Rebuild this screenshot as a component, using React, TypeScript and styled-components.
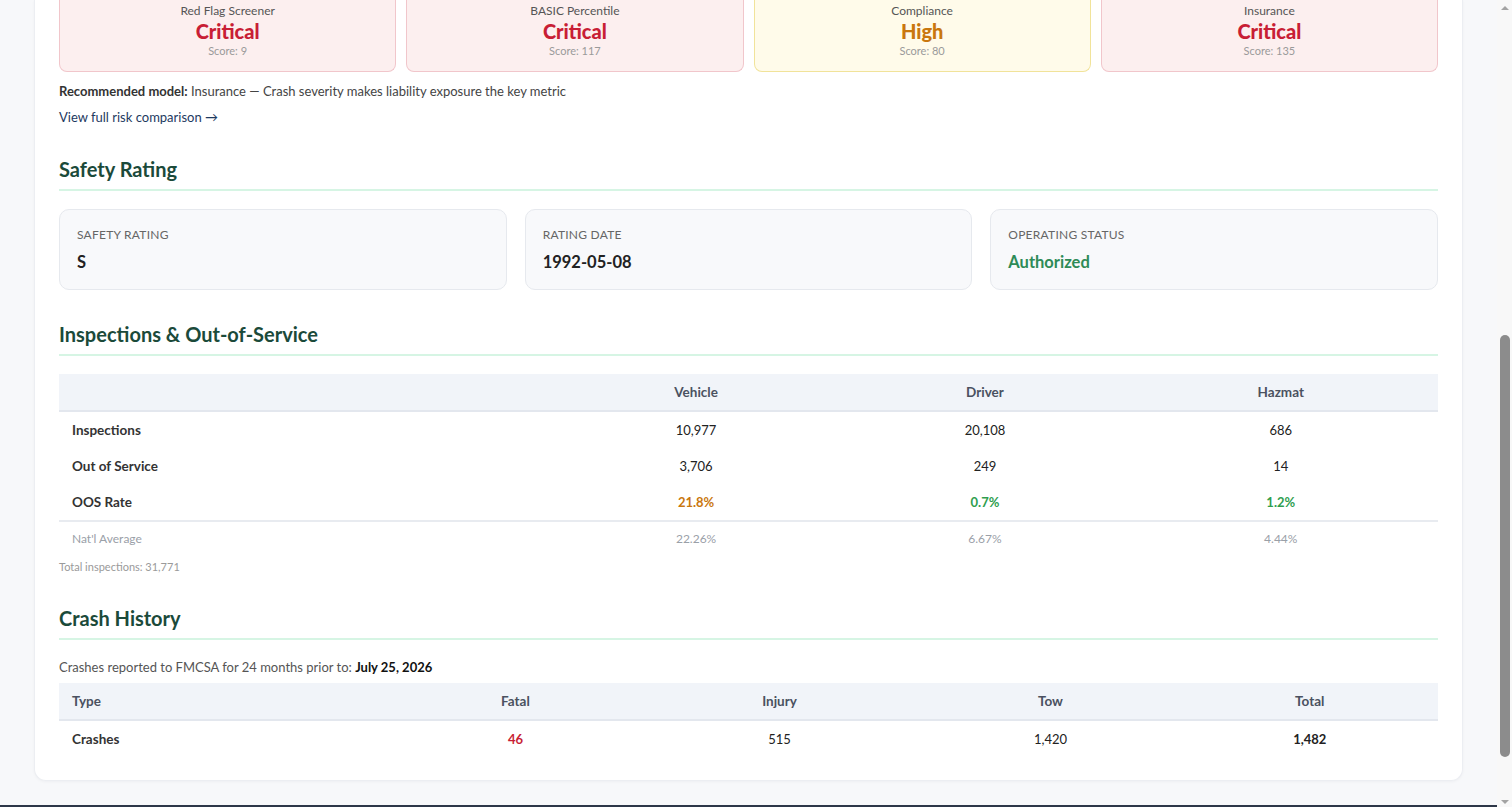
import React from 'react';
import styled, { createGlobalStyle } from 'styled-components';

const GlobalStyle = createGlobalStyle`
  html, body {
    margin: 0;
    padding: 0;
    overflow: hidden;
  }
  body {
    background: #f7f8fa;
    font-family: Lato, 'Noto Sans', sans-serif;
    color: #222;
  }
`;

const Shell = styled.div`
  display: grid;
  grid-template-columns: 1fr 15px;
  height: 100vh;
`;

const Viewport = styled.div`
  display: flex;
  flex-direction: column;
  min-width: 0;
`;

const Page = styled.main`
  padding: 0 34px 24px;
`;

const Card = styled.section`
  background: #fff;
  border: 1px solid #eceef2;
  border-top: none;
  border-radius: 0 0 12px 12px;
  box-shadow: 0 1px 3px rgba(20, 30, 50, 0.04);
  padding: 0 24px 23px;
`;

const SectionTitle = styled.h2`
  margin: 32px 0 18px;
  padding-bottom: 8px;
  border-bottom: 2px solid #d6f5e4;
  font-size: 20px;
  line-height: 24px;
  font-weight: 700;
  color: #1b4a3a;
`;

const RiskGrid = styled.div`
  display: grid;
  grid-template-columns: repeat(4, 1fr);
  gap: 10px;
`;

type RiskTone = 'red' | 'amber';

const RiskCard = styled.div<{ $tone: RiskTone }>`
  padding: 3px 12px 12px;
  text-align: center;
  border-radius: 0 0 8px 8px;
  border: 1px solid ${(p) => (p.$tone === 'red' ? '#f1c6cb' : '#f1e39a')};
  border-top: none;
  background: ${(p) => (p.$tone === 'red' ? '#fcefef' : '#fffbea')};
`;

const RiskLabel = styled.div`
  font-size: 12px;
  line-height: 16px;
  color: #555;
`;

const RiskLevel = styled.div<{ $tone: RiskTone }>`
  font-size: 20px;
  line-height: 24px;
  font-weight: 900;
  color: ${(p) => (p.$tone === 'red' ? '#c81e35' : '#c9770e')};
`;

const RiskScore = styled.div`
  font-size: 11px;
  line-height: 16px;
  color: #9a9a9a;
`;

const Note = styled.p`
  margin: 11px 0 0;
  font-size: 13px;
  line-height: 16px;
  color: #444;

  b {
    color: #333;
  }
`;

const TextLink = styled.a`
  display: block;
  margin-top: 10px;
  font-size: 13px;
  line-height: 16px;
  color: #1e3a5f;
  text-decoration: none;
`;

const StatGrid = styled.div`
  display: grid;
  grid-template-columns: repeat(3, 1fr);
  gap: 18px;
`;

const StatCard = styled.div`
  background: #f8f9fb;
  border: 1px solid #e6e9ee;
  border-radius: 10px;
  padding: 17px 17px 16px;
`;

const StatLabel = styled.div`
  font-size: 12px;
  line-height: 16px;
  text-transform: uppercase;
  letter-spacing: 0.02em;
  color: #666;
`;

const StatValue = styled.div<{ $good?: boolean }>`
  margin-top: 8px;
  font-size: 16.5px;
  line-height: 22px;
  font-weight: 700;
  color: ${(p) => (p.$good ? '#2e8b57' : '#222')};
`;

const Table = styled.table`
  width: 100%;
  border-collapse: collapse;
  table-layout: fixed;
  font-size: 13px;
`;

const Th = styled.th<{ $left?: boolean }>`
  height: 36px;
  padding: 0 13px;
  background: #f1f4f9;
  border-bottom: 2px solid #e3e7ee;
  font-size: 13.5px;
  font-weight: 700;
  color: #4a5160;
  text-align: ${(p) => (p.$left ? 'left' : 'center')};
`;

const Row = styled.tr<{ $divider?: boolean }>`
  border-bottom: ${(p) => (p.$divider ? '2px solid #e8ebf0' : 'none')};
`;

const RowLabel = styled.td<{ $muted?: boolean }>`
  height: ${(p) => (p.$muted ? '32px' : '36px')};
  padding: 0 13px;
  font-size: ${(p) => (p.$muted ? '12px' : '13.5px')};
  font-weight: ${(p) => (p.$muted ? 400 : 700)};
  color: ${(p) => (p.$muted ? '#9aa0a8' : '#333')};
`;

type Tone = 'plain' | 'warn' | 'good' | 'bad' | 'muted' | 'strong';

const toneColor: Record<Tone, string> = {
  plain: '#222',
  warn: '#c9770e',
  good: '#2f9e4f',
  bad: '#c81e35',
  muted: '#9aa0a8',
  strong: '#222',
};

const Cell = styled.td<{ $tone?: Tone }>`
  padding: 0 13px;
  text-align: center;
  font-size: ${(p) => (p.$tone === 'muted' ? '12px' : '13px')};
  font-weight: ${(p) => (p.$tone && ['warn', 'good', 'bad', 'strong'].includes(p.$tone) ? 700 : 400)};
  color: ${(p) => toneColor[p.$tone || 'plain']};
`;

const SmallNote = styled.div`
  margin-top: 6px;
  font-size: 11px;
  line-height: 14px;
  color: #9a9a9a;
`;

const CrashIntro = styled.p`
  margin: 0 0 7px;
  font-size: 13px;
  line-height: 18px;
  color: #555;

  b {
    color: #111;
  }
`;

const Footer = styled.footer`
  height: 4px;
  background: #2d3748;
`;

const ScrollRail = styled.aside`
  background: #f8f8f8;
  display: flex;
  flex-direction: column;
  align-items: center;
`;

const RailArrow = styled.div<{ $down?: boolean }>`
  height: 15px;
  display: flex;
  align-items: center;
  justify-content: center;

  &::before {
    content: '';
    border-left: 4px solid transparent;
    border-right: 4px solid transparent;
    ${(p) => (p.$down ? 'border-top: 4px solid #a3a3a3;' : 'border-bottom: 4px solid #a3a3a3;')}
  }
`;

const RailTrack = styled.div`
  flex: 1;
  display: flex;
  flex-direction: column;
  align-items: center;
`;

const RailThumb = styled.div`
  margin-top: 320px;
  width: 10px;
  height: 422px;
  border-radius: 5px;
  background: #8c8c8c;
`;

const risks: { label: string; level: string; score: number; tone: RiskTone }[] = [
  { label: 'Red Flag Screener', level: 'Critical', score: 9, tone: 'red' },
  { label: 'BASIC Percentile', level: 'Critical', score: 117, tone: 'red' },
  { label: 'Compliance', level: 'High', score: 80, tone: 'amber' },
  { label: 'Insurance', level: 'Critical', score: 135, tone: 'red' },
];

export default function App() {
  return (
    <>
      <GlobalStyle />
      <Shell>
        <Viewport>
          <Page>
            <Card>
              <RiskGrid>
                {risks.map((r) => (
                  <RiskCard key={r.label} $tone={r.tone}>
                    <RiskLabel>{r.label}</RiskLabel>
                    <RiskLevel $tone={r.tone}>{r.level}</RiskLevel>
                    <RiskScore>Score: {r.score}</RiskScore>
                  </RiskCard>
                ))}
              </RiskGrid>
              <Note>
                <b>Recommended model:</b> Insurance — Crash severity makes liability exposure the key metric
              </Note>
              <TextLink href="#">View full risk comparison →</TextLink>

              <SectionTitle>Safety Rating</SectionTitle>
              <StatGrid>
                <StatCard>
                  <StatLabel>Safety Rating</StatLabel>
                  <StatValue>S</StatValue>
                </StatCard>
                <StatCard>
                  <StatLabel>Rating Date</StatLabel>
                  <StatValue>1992-05-08</StatValue>
                </StatCard>
                <StatCard>
                  <StatLabel>Operating Status</StatLabel>
                  <StatValue $good>Authorized</StatValue>
                </StatCard>
              </StatGrid>

              <SectionTitle>Inspections &amp; Out-of-Service</SectionTitle>
              <Table>
                <colgroup>
                  <col style={{ width: '35.3%' }} />
                  <col style={{ width: '21.8%' }} />
                  <col style={{ width: '20.1%' }} />
                  <col style={{ width: '22.8%' }} />
                </colgroup>
                <thead>
                  <tr>
                    <Th $left />
                    <Th>Vehicle</Th>
                    <Th>Driver</Th>
                    <Th>Hazmat</Th>
                  </tr>
                </thead>
                <tbody>
                  <Row>
                    <RowLabel>Inspections</RowLabel>
                    <Cell>10,977</Cell>
                    <Cell>20,108</Cell>
                    <Cell>686</Cell>
                  </Row>
                  <Row>
                    <RowLabel>Out of Service</RowLabel>
                    <Cell>3,706</Cell>
                    <Cell>249</Cell>
                    <Cell>14</Cell>
                  </Row>
                  <Row $divider>
                    <RowLabel>OOS Rate</RowLabel>
                    <Cell $tone="warn">21.8%</Cell>
                    <Cell $tone="good">0.7%</Cell>
                    <Cell $tone="good">1.2%</Cell>
                  </Row>
                  <Row>
                    <RowLabel $muted>Nat'l Average</RowLabel>
                    <Cell $tone="muted">22.26%</Cell>
                    <Cell $tone="muted">6.67%</Cell>
                    <Cell $tone="muted">4.44%</Cell>
                  </Row>
                </tbody>
              </Table>
              <SmallNote>Total inspections: 31,771</SmallNote>

              <SectionTitle>Crash History</SectionTitle>
              <CrashIntro>
                Crashes reported to FMCSA for 24 months prior to: <b>July 25, 2026</b>
              </CrashIntro>
              <Table>
                <colgroup>
                  <col style={{ width: '24.1%' }} />
                  <col style={{ width: '18%' }} />
                  <col style={{ width: '20.3%' }} />
                  <col style={{ width: '19%' }} />
                  <col style={{ width: '18.6%' }} />
                </colgroup>
                <thead>
                  <tr>
                    <Th $left>Type</Th>
                    <Th>Fatal</Th>
                    <Th>Injury</Th>
                    <Th>Tow</Th>
                    <Th>Total</Th>
                  </tr>
                </thead>
                <tbody>
                  <Row>
                    <RowLabel>Crashes</RowLabel>
                    <Cell $tone="bad">46</Cell>
                    <Cell>515</Cell>
                    <Cell>1,420</Cell>
                    <Cell $tone="strong">1,482</Cell>
                  </Row>
                </tbody>
              </Table>
            </Card>
          </Page>
          <Footer />
        </Viewport>
        <ScrollRail>
          <RailArrow />
          <RailTrack>
            <RailThumb />
          </RailTrack>
          <RailArrow $down />
        </ScrollRail>
      </Shell>
    </>
  );
}
